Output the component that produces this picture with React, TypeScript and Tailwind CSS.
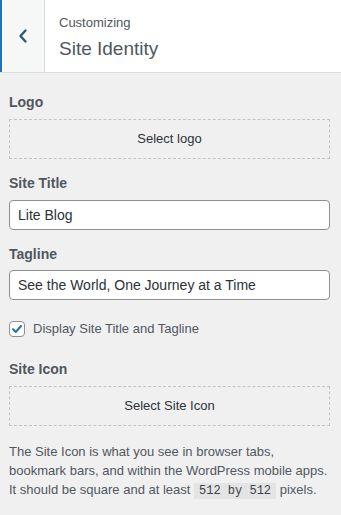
import { useState } from "react";

// --- Bloques del panel ---
function SectionLabel({ children }: { children: React.ReactNode }) {
    return <span className="block text-[14px] font-semibold leading-[18px] text-[#50575e]">{children}</span>;
}

function DashedButton({ label }: { label: string }) {
    return (
        <button
            type="button"
            className="flex h-[40px] w-full items-center justify-center border border-dashed border-[#c3c4c7] text-[13px] text-[#2c3338]"
        >
            {label}
        </button>
    );
}

function TextInput({ value, onChange }: { value: string; onChange: (v: string) => void }) {
    return (
        <input
            type="text"
            value={value}
            onChange={(e) => onChange(e.target.value)}
            className="h-[30px] w-full rounded-[4px] border border-[#8c8f94] bg-white px-[8px] text-[14px] text-[#2c3338] outline-none"
        />
    );
}

export default function App() {
    const [title, setTitle] = useState("Lite Blog");
    const [tagline, setTagline] = useState("See the World, One Journey at a Time");
    const [showTitle, setShowTitle] = useState(true);

    return (
        <div className="h-[515px] w-[341px] overflow-hidden bg-[#f0f0f1] font-['Segoe_UI','Liberation_Sans',sans-serif]">
            {/* Cabecera */}
            <div className="flex h-[73px] border-b border-[#dcdcde] bg-white">
                <button
                    type="button"
                    aria-label="Volver"
                    className="flex w-[45px] items-center justify-center border-l-2 border-r border-l-[#2271b1] border-r-[#dcdcde] bg-[#f6f7f7]"
                >
                    <svg width="12" height="16" viewBox="0 0 12 16" fill="none">
                        <path d="M8.5 2.5 3.5 8l5 5.5" stroke="#2c5a7a" strokeWidth="2.4" strokeLinecap="round" strokeLinejoin="round" />
                    </svg>
                </button>
                <div className="flex flex-col justify-center pl-[14px] pt-[4px]">
                    <span className="text-[13px] leading-[18px] text-[#50575e]">Customizing</span>
                    <span className="mt-[4px] text-[19px] leading-[26px] text-[#50575e]">Site Identity</span>
                </div>
            </div>

            <div className="pl-[9px] pr-[11px] pt-[20px]">
                <SectionLabel>Logo</SectionLabel>
                <div className="mt-[8px]">
                    <DashedButton label="Select logo" />
                </div>

                <div className="mt-[15px]">
                    <SectionLabel>Site Title</SectionLabel>
                </div>
                <div className="mt-[8px]">
                    <TextInput value={title} onChange={setTitle} />
                </div>

                <div className="mt-[15px]">
                    <SectionLabel>Tagline</SectionLabel>
                </div>
                <div className="mt-[7px]">
                    <TextInput value={tagline} onChange={setTagline} />
                </div>

                <label className="mt-[19px] flex items-center gap-[8px] text-[13px] text-[#50575e]">
                    <button
                        type="button"
                        onClick={() => setShowTitle(!showTitle)}
                        className="flex h-[16px] w-[16px] items-center justify-center rounded-[4px] border border-[#8c8f94] bg-white"
                    >
                        {showTitle && (
                            <svg width="12" height="12" viewBox="0 0 12 12" fill="none">
                                <path d="M2 6.2 4.8 9 10 3" stroke="#2271b1" strokeWidth="2" strokeLinecap="round" strokeLinejoin="round" />
                            </svg>
                        )}
                    </button>
                    Display Site Title and Tagline
                </label>

                <div className="mt-[21px]">
                    <SectionLabel>Site Icon</SectionLabel>
                </div>
                <div className="mt-[8px]">
                    <DashedButton label="Select Site Icon" />
                </div>

                <p className="mt-[16px] text-[13px] leading-[19px] text-[#50575e]">
                    The Site Icon is what you see in browser tabs, bookmark bars, and within the WordPress mobile apps. It should be square and at least{" "}
                    <code className="bg-[#e4e4e5] px-[5px] py-[1px] font-['Liberation_Mono',monospace] text-[12px] text-[#3c434a]">512 by 512</code>{" "}
                    pixels.
                </p>
            </div>
        </div>
    );
}
